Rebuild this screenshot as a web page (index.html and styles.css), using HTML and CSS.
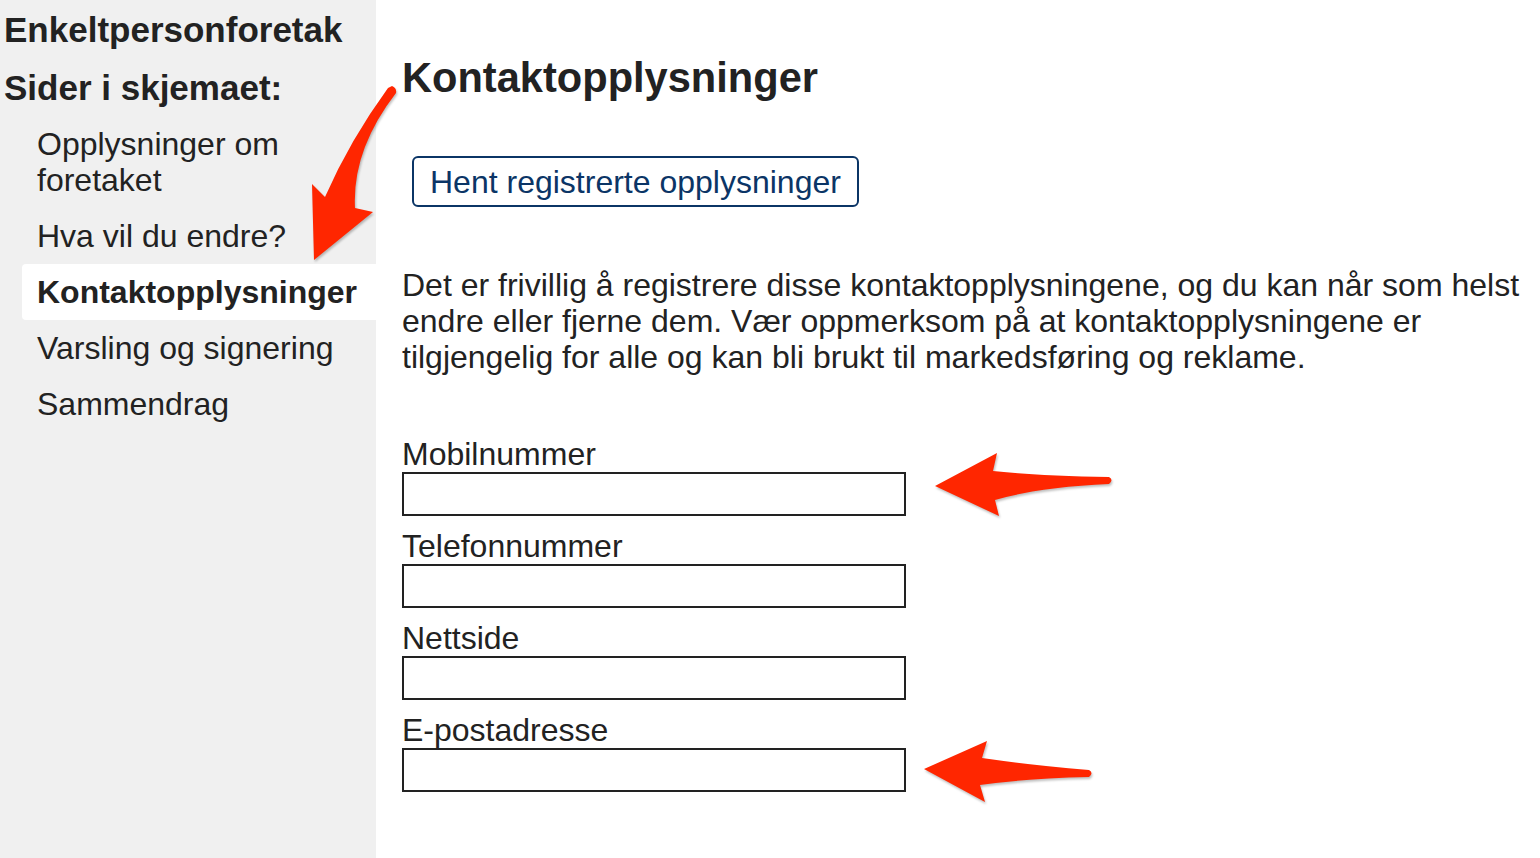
FILE: index.html
```html
<!DOCTYPE html>
<html lang="no">
<head>
    <meta charset="UTF-8">
    <meta name="viewport" content="width=device-width, initial-scale=1.0">
    <title>Kontaktopplysninger - Enkeltpersonforetak</title>
    <link rel="stylesheet" href="styles.css">
</head>
<body>
    <div class="page">
        <nav class="sidebar">
            <h2 class="form-title">Enkeltpersonforetak</h2>
            <h2 class="form-title">Sider i skjemaet:</h2>
            <ul class="steps">
                <li>Opplysninger om foretaket</li>
                <li>Hva vil du endre?</li>
                <li class="active">Kontaktopplysninger</li>
                <li>Varsling og signering</li>
                <li>Sammendrag</li>
            </ul>
        </nav>

        <main class="content">
            <h1>Kontaktopplysninger</h1>
            <button type="button" class="fetch-button">Hent registrerte opplysninger</button>
            <p class="intro">Det er frivillig å registrere disse kontaktopplysningene, og du kan når som helst endre eller fjerne dem. Vær oppmerksom på at kontaktopplysningene er tilgjengelig for alle og kan bli brukt til markedsføring og reklame.</p>

            <form class="contact-form">
                <label for="mobile">Mobilnummer</label>
                <input type="tel" id="mobile" name="mobile">

                <label for="phone">Telefonnummer</label>
                <input type="tel" id="phone" name="phone">

                <label for="website">Nettside</label>
                <input type="text" id="website" name="website">

                <label for="email">E-postadresse</label>
                <input type="email" id="email" name="email">
            </form>
        </main>
    </div>

    <!-- Piler lagt over skjermbildet -->
    <svg class="annotations" width="1540" height="858" viewBox="0 0 1540 858">
        <g fill="#ff2600">
            <path d="M 392 86 Q 397 88 396 93 Q 352 150 355 208 L 373 212 L 314 260 L 312 184 L 325 197 Q 350 140 388 88 Z"/>
            <path d="M 935 486 L 997 453 L 993 471 Q 1040 476 1109 477 Q 1114 480 1109 484 Q 1040 487 995 500 L 999 516 Z"/>
            <path d="M 924 769 L 987 741 L 982 758 Q 1030 765 1089 770 Q 1094 773 1089 777 Q 1030 778 980 785 L 985 802 Z"/>
        </g>
    </svg>
</body>
</html>
```

FILE: styles.css
```css
body {
    font-family: "Liberation Sans", Arial, sans-serif;
    margin: 0;
    padding: 0;
    color: #222;
    background-color: white;
}
.page {
    display: flex;
    min-height: 858px;
}
.sidebar {
    width: 376px;
    flex-shrink: 0;
    background-color: #f0f0f0;
    padding-top: 9px;
}
.form-title {
    font-size: 35px;
    line-height: 42px;
    margin: 0 0 16px 4px;
}
.steps {
    list-style: none;
    margin: -9px 0 0 22px;
    padding: 0;
}
.steps li {
    font-size: 32px;
    line-height: 36px;
    padding: 10px 20px 10px 15px;
}
.steps li.active {
    background-color: white;
    font-weight: bold;
    border-radius: 4px 0 0 4px;
}
.content {
    flex: 1;
    padding-left: 26px;
}
h1 {
    font-size: 41.6px;
    line-height: 48px;
    margin: 54px 0 54px 0;
}
.fetch-button {
    font-family: inherit;
    font-size: 32px;
    line-height: 36px;
    color: #0b3566;
    background-color: white;
    border: 2px solid #0b3566;
    border-radius: 6px;
    padding: 6px 16px 5px;
    margin-left: 10px;
    cursor: pointer;
}
.intro {
    font-size: 32px;
    line-height: 36px;
    margin: 60px 0 61px 0;
}
.contact-form {
    display: flex;
    flex-direction: column;
}
.contact-form label {
    font-size: 32px;
    line-height: 36px;
}
.contact-form input {
    width: 504px;
    height: 44px;
    box-sizing: border-box;
    border: 2px solid #222;
    margin: 0 0 12px 0;
    font-size: 28px;
}
.annotations {
    position: absolute;
    left: 0;
    top: 0;
    pointer-events: none;
    filter: drop-shadow(1px 2px 1px rgba(0, 0, 0, 0.25));
}
```
